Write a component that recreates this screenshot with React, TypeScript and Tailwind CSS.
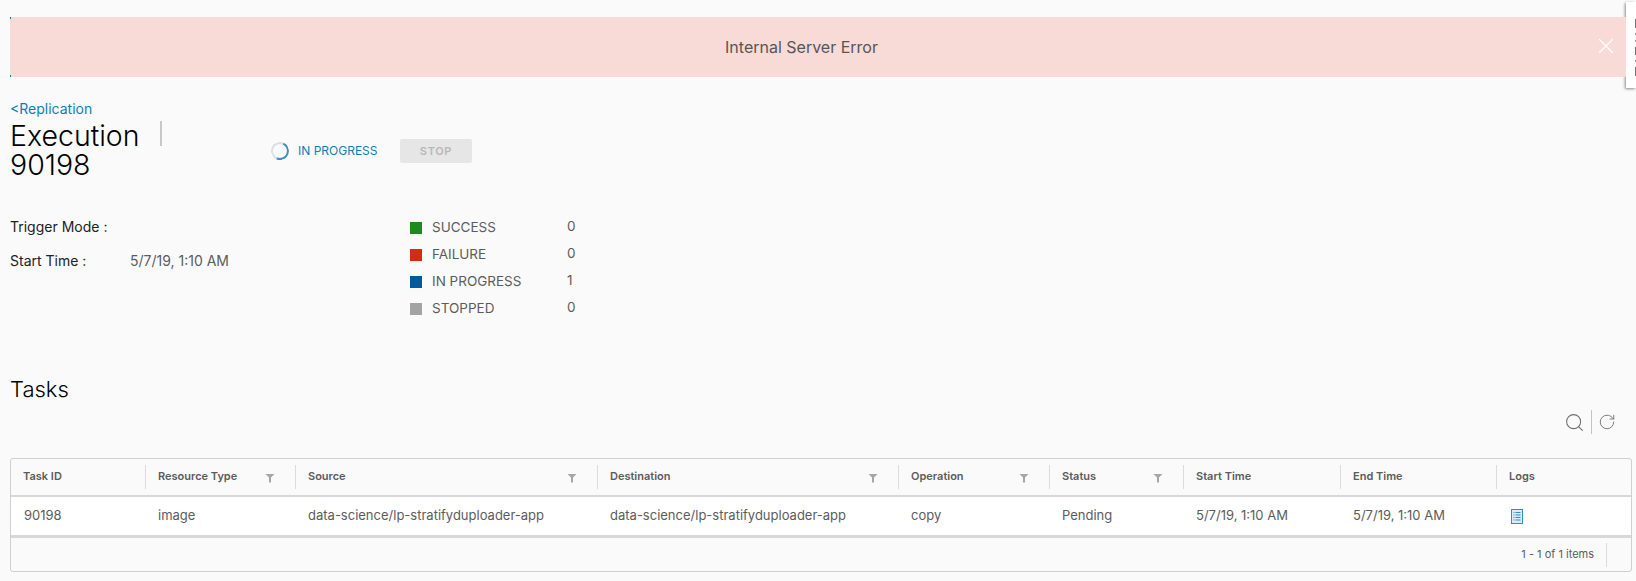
import { X, Search, RotateCw } from 'lucide-react';

const columns = [
  { label: 'Task ID', value: '90198', width: 'w-[134px]' },
  { label: 'Resource Type', value: 'image', width: 'w-[150px]', filter: true },
  { label: 'Source', value: 'data-science/lp-stratifyduploader-app', width: 'w-[302px]', filter: true },
  { label: 'Destination', value: 'data-science/lp-stratifyduploader-app', width: 'w-[301px]', filter: true },
  { label: 'Operation', value: 'copy', width: 'w-[151px]', filter: true },
  { label: 'Status', value: 'Pending', width: 'w-[134px]', filter: true },
  { label: 'Start Time', value: '5/7/19, 1:10 AM', width: 'w-[157px]' },
  { label: 'End Time', value: '5/7/19, 1:10 AM', width: 'w-[156px]' },
  { label: 'Logs', value: '', width: 'w-[135px]' },
];

const legend = [
  { label: 'SUCCESS', count: 0, color: 'bg-[#1d8a1d]' },
  { label: 'FAILURE', count: 0, color: 'bg-[#d42a17]' },
  { label: 'IN PROGRESS', count: 1, color: 'bg-[#005a9c]' },
  { label: 'STOPPED', count: 0, color: 'bg-[#a3a3a3]' },
];

function FilterIcon() {
  return (
    <svg viewBox="0 0 10 10" className="w-[10px] h-[10px] mt-[3px] text-[#a6a6a6]">
      <path d="M0.5 1h9L6 4.6V9.5H4V4.6z" fill="currentColor" />
    </svg>
  );
}

function LogIcon() {
  return (
    <svg viewBox="0 0 12 15" className="w-[12px] h-[15px]">
      <rect x="0.5" y="0.5" width="11" height="14" fill="#d9ecf7" stroke="#2f8ecb" />
      <path d="M2.5 3.5h1M2.5 6h1M2.5 8.5h1M2.5 11h1M4.5 3.5h5M4.5 6h5M4.5 8.5h5M4.5 11h5" stroke="#2f8ecb" />
    </svg>
  );
}

export default function App() {
  return (
    <div className="relative h-[581px] overflow-hidden bg-[#fafafa] font-['Inter','Liberation_Sans',sans-serif] text-[#5c5c5c]">
      {/* side popup cut off by the window */}
      <div className="absolute right-0 top-[2px] w-[10px] h-[86px] bg-white shadow-[-1px_1px_3px_rgba(0,0,0,0.45)] overflow-hidden">
        <div className="ml-[9px] mt-[17px] flex flex-col gap-[5px]">
          <div className="w-[2px] h-[9px] bg-[#777]"></div>
          <div className="w-[2px] h-[2px] bg-[#999]"></div>
          <div className="w-[2px] h-[2px] bg-[#999]"></div>
          <div className="w-[2px] h-[8px] bg-[#777]"></div>
          <div className="w-[2px] h-[2px] bg-[#999]"></div>
          <div className="w-[2px] h-[9px] bg-[#777]"></div>
        </div>
      </div>

      <div className="pl-[10px] pt-[17px] pr-[4px]">
        <div className="mr-[6px] h-[60px] bg-[#f8dad7] flex items-center justify-center relative text-[16px] text-[#565656]">
          <span className="-mt-[1px] -ml-[33px]">Internal Server Error</span>
          <X className="absolute right-[7px] top-[16px] w-[26px] h-[26px] text-white" strokeWidth={1} />
          <span className="absolute left-0 top-0 w-[1px] h-[2px] bg-[#0079b8]"></span>
          <span className="absolute left-0 bottom-0 w-[1px] h-[2px] bg-[#0079b8]"></span>
        </div>

        <a className="block mt-[23px] text-[14px] leading-[18px] text-[#0a7fba]">&lt;Replication</a>

        <div className="flex items-start">
          <h1 className="w-[150px] text-[28.5px] leading-[28.5px] font-light text-black mt-[4px]">Execution 90198</h1>
          <div className="w-[2px] h-[25px] bg-[#c8c8c8] mt-[3px]"></div>
          <div className="flex items-center ml-[109px] mt-[21px]">
            <div className="w-[18px] h-[18px] rounded-full border-2 border-[#dcdfe2] border-r-[#3d8fc6] border-b-[#3d8fc6] -rotate-[20deg]"></div>
            <span className="ml-[9px] w-[102px] text-[12px] text-[#0a7fba]">IN PROGRESS</span>
            <button className="w-[72px] h-[24px] rounded-[2px] bg-[#e6e6e6] text-[11px] font-semibold tracking-[0.06em] text-[#b8b8b8]">STOP</button>
          </div>
        </div>

        <div className="flex mt-[35px]">
          <div className="w-[400px] pt-[3px] text-[14px]">
            <div className="h-[34px] leading-[20px] text-[#222]">Trigger Mode :</div>
            <div className="flex leading-[20px]">
              <span className="w-[120px] text-[#222]">Start Time :</span>
              <span>5/7/19, 1:10 AM</span>
            </div>
          </div>
          <div className="flex flex-col text-[13.5px]">
            {legend.map((item) => (
              <div key={item.label} className="flex items-center h-[27px]">
                <div className={`w-[12px] h-[12px] ${item.color}`}></div>
                <span className="ml-[10px] w-[135px]">{item.label}</span>
                <span className="-mt-[3px]">{item.count}</span>
              </div>
            ))}
          </div>
        </div>

        <h2 className="mt-[54px] text-[22px] leading-[26px] font-light text-black">Tasks</h2>

        <div className="flex justify-end items-center h-[24px] mt-[8px] pr-[16px] text-[#6f6f6f]">
          <Search className="w-[21px] h-[21px]" strokeWidth={1.2} />
          <div className="w-[1px] h-[24px] bg-[#c4c4c4] mx-[6px]"></div>
          <RotateCw className="w-[18px] h-[18px]" strokeWidth={1.2} />
        </div>

        <div className="mt-[24px] w-[1622px] h-[114px] rounded-[3px] border border-[#cfcfcf] overflow-hidden">
          <div className="flex h-[38px] border-b-2 border-[#d8d8d8]">
            {columns.map((col, i) => (
              <div key={col.label} className={`${col.width} shrink-0 py-[6px]`}>
                <div className={`h-full flex items-center justify-between pl-[12px] pr-[20px] pb-[2px] text-[11px] font-semibold ${i > 0 ? 'border-l border-[#dcdcdc]' : ''}`}>
                  <span>{col.label}</span>
                  {col.filter && <FilterIcon />}
                </div>
              </div>
            ))}
          </div>
          <div className="flex h-[41px] bg-white border-b-[3px] border-[#d8d8d8] text-[13px]">
            {columns.map((col) => (
              <div key={col.label} className={`${col.width} shrink-0 pl-[13px] flex items-center`}>
                {col.label === 'Logs' ? <div className="ml-[2px] flex"><LogIcon /></div> : col.value}
              </div>
            ))}
          </div>
          <div className="flex justify-end items-center h-[33px] pr-[24px] text-[11px]">
            <span>1 - 1 of 1 items</span>
            <div className="w-[1px] h-[24px] bg-[#dcdcdc] ml-[12px]"></div>
          </div>
        </div>
      </div>
    </div>
  );
}
